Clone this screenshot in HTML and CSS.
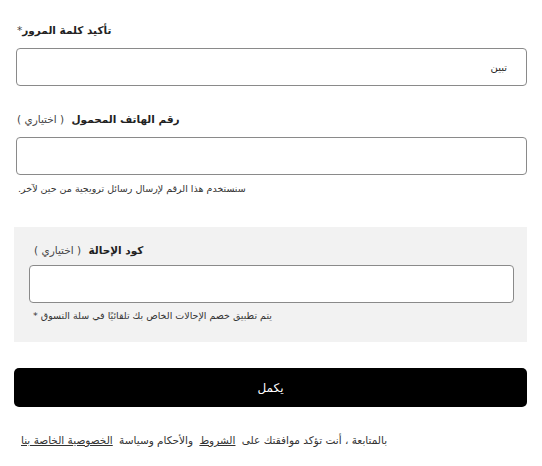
FILE: index.html
```html
<!DOCTYPE html>
<html lang="ar">
<head>
<meta charset="utf-8">
<link rel="stylesheet" href="styles.css">
</head>
<body>
<form class="form" dir="rtl">
  <div class="field field-first">
    <label class="label"><span class="label-main">تأكيد كلمة المرور</span><span class="req">*</span></label>
    <input class="input" type="text" value="تبين">
  </div>
  <div class="field field-phone">
    <label class="label"><span class="label-main">رقم الهاتف المحمول</span> <span class="optional">( اختياري )</span></label>
    <input class="input" type="text">
    <p class="help">سنستخدم هذا الرقم لإرسال رسائل ترويجية من حين لآخر.</p>
  </div>
  <div class="referral">
    <label class="label"><span class="label-main">كود الإحالة</span> <span class="optional">( اختياري )</span></label>
    <input class="input" type="text">
    <p class="help">يتم تطبيق خصم الإحالات الخاص بك تلقائيًا في سلة التسوق *</p>
  </div>
  <button class="submit" type="button">يكمل</button>
  <p class="legal">بالمتابعة ، أنت تؤكد موافقتك على <a href="#">الشروط</a> والأحكام وسياسة <a href="#">الخصوصية الخاصة بنا</a></p>
</form>
</body>
</html>
```

FILE: styles.css
```css
html, body {
  margin: 0;
  padding: 0;
  background: #fff;
}
body {
  font-family: "DejaVu Sans", "Noto Sans", sans-serif;
  color: #222;
}
.form {
  width: 513px;
  margin-left: 14px;
  padding-top: 22px;
  text-align: left;
}
.field {
  display: flex;
  flex-direction: column;
  align-items: stretch;
}
.label {
  display: block;
  font-size: 10.5px;
  line-height: 16px;
  text-align: left;
  padding-left: 3px;
}
.field-phone .label {
  padding-top: 2px;
}
.label-main {
  font-weight: bold;
  color: #222;
}
.req {
  color: #444;
  font-weight: normal;
}
.optional {
  font-weight: normal;
  color: #444;
  margin-right: 4px;
}
.input {
  display: block;
  box-sizing: border-box;
  height: 38px;
  margin: 10px 0 0 1px;
  width: 511px;
  border: 1px solid #8a8a8a;
  border-radius: 4px;
  background: #fff;
  padding: 0 19px;
  font-family: "DejaVu Sans", sans-serif;
  font-size: 10px;
  color: #222;
  text-align: right;
}
.field-phone {
  margin-top: 23px;
}
.help {
  margin: 7px 0 0;
  font-size: 9.5px;
  line-height: 14px;
  color: #333;
  padding-left: 4px;
  text-align: left;
}
.referral {
  margin-top: 31px;
  background: #f2f2f2;
  padding: 15px 13px 19px;
  box-sizing: border-box;
}
.referral .label {
  padding-left: 7px;
}
.referral .input {
  width: 485px;
  margin: 7px 0 0 1px;
}
.referral .help {
  margin-top: 6px;
  padding-left: 6px;
}
.submit {
  display: block;
  width: 513px;
  height: 39px;
  margin-top: 26px;
  border: 0;
  border-radius: 5px;
  background: #000;
  color: #fff;
  font-family: "DejaVu Sans", sans-serif;
  font-size: 12px;
}
.legal {
  margin: 26px 0 0;
  font-size: 10.5px;
  line-height: 14px;
  color: #333;
  padding-left: 4px;
  text-align: left;
}
.legal a {
  color: #333;
  text-decoration: underline;
  margin: 0 3px;
}
```
